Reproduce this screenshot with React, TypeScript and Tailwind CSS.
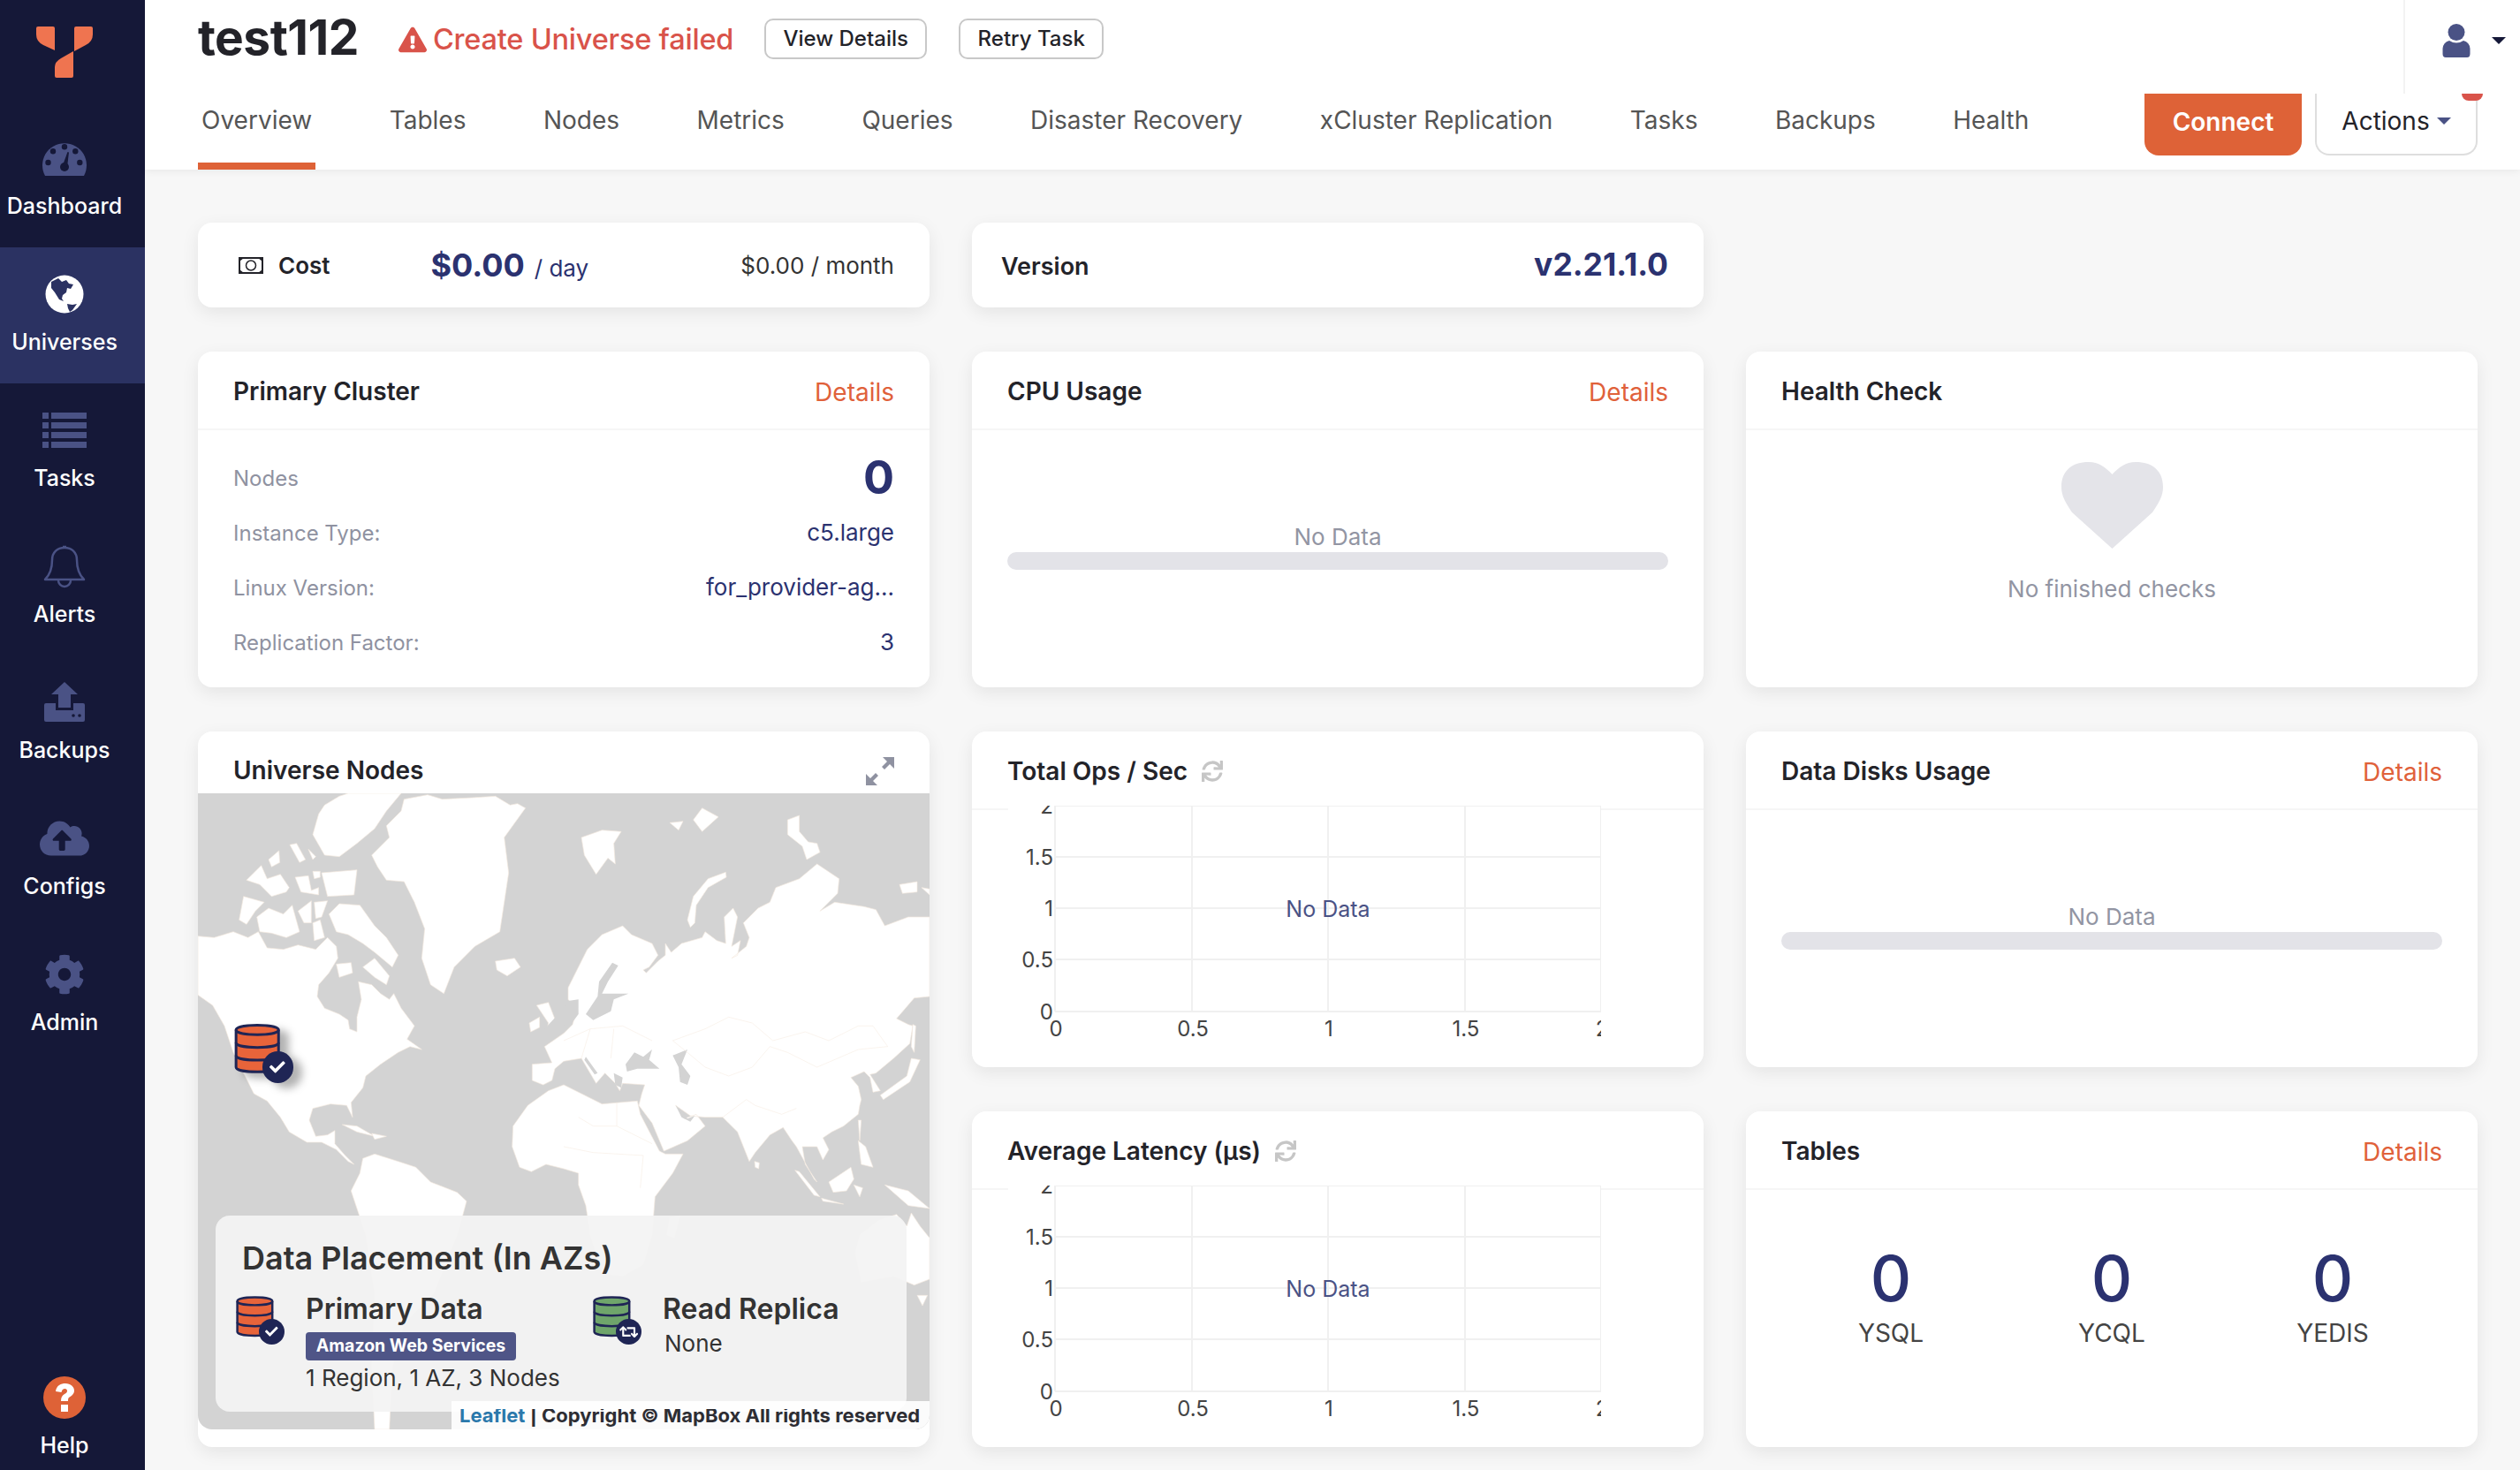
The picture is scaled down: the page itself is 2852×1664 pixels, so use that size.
import React from 'react';
import { FaCheck, FaCloudUploadAlt, FaCog, FaExclamationTriangle, FaRetweet, FaSync } from 'react-icons/fa';

const ICON = '#4a5285';

const DashboardIcon = () => (
  <svg width="50" height="40" viewBox="0 0 50 40">
    <path d="M3 40 A25 25 0 1 1 47 40 Z" fill={ICON} />
    <g fill="#151838">
      <circle cx="6.500" cy="25" r="3.200" />
      <circle cx="12" cy="12.300" r="3.200" />
      <circle cx="25" cy="7.300" r="3.200" />
      <circle cx="37.300" cy="12.300" r="3.200" />
      <circle cx="42.300" cy="25" r="3.200" />
      <circle cx="25" cy="30" r="5" />
      <path d="M23 28 L28.500 13 L30 13.500 L28 30 Z" />
    </g>
  </svg>
);

const GlobeIcon = () => (
  <svg width="44" height="44" viewBox="0 0 44 44">
    <circle cx="22" cy="22" r="21.500" fill="#fff" />
    <path d="M7 8 L15 4 L19 8 L24 6 L27 10 L32 11 L29 16 L25 15 L24 20 L20 23 L19 27 L21 30 L16 28 L11 20 L7 15 Z" fill="#2b3262" />
    <path d="M25 33 L31 34 L36 33 L31 40 L28 42 L26 38 Z" fill="#2b3262" />
  </svg>
);

const TasksIcon = () => (
  <svg width="52" height="40" viewBox="0 0 52 40" fill={ICON}>
    {[0, 11, 22, 33].map(y => (
      <g key={y}>
        <rect x="1" y={y} width="7" height="7" />
        <rect x="11" y={y} width="40" height="7" />
      </g>
    ))}
  </svg>
);

const BellIcon = () => (
  <svg width="48" height="50" viewBox="0 0 48 50" fill="none" stroke={ICON} strokeWidth="2.500" strokeLinejoin="round">
    <path d="M2 40 C9 33 10 24 10 18 C10 9 16 4 24 4 C32 4 38 9 38 18 C38 24 39 33 46 40 Z" />
    <path d="M17 41 A7 7 0 0 0 31 41" />
    <path d="M22 3 H26" />
  </svg>
);

const BackupIcon = () => (
  <svg width="48" height="46" viewBox="0 0 48 46" fill={ICON}>
    <path d="M24 0 L39 14 H31 V29 H17 V14 H9 Z" />
    <path d="M3 24 H14 V32 H34 V24 H45 Q47 24 47 26 V43 Q47 45 45 45 H3 Q1 45 1 43 V26 Q1 24 3 24 Z" />
    <circle cx="34" cy="38" r="1.800" fill="#151838" />
    <circle cx="41" cy="38" r="1.800" fill="#151838" />
  </svg>
);

const HelpIcon = () => (
  <svg width="48" height="48" viewBox="0 0 48 48">
    <circle cx="24" cy="24" r="24" fill="#de6237" />
    <path d="M14 17 C15 10 20 8 25 8 C31 8 35 12 35 16 C35 20 32 22 29 24 C28 25 28 26 28 28 H20 C20 24 21 22 24 20 C26 19 27 18 27 16.500 C27 15 26 14 24.500 14 C22.500 14 21 15.500 20.500 18 Z" fill="#fff" />
    <rect x="20" y="32" width="8" height="8" fill="#fff" />
  </svg>
);

const Logo = () => (
  <svg width="64" height="58" viewBox="0 0 64 58" fill="#ef7450">
    <path d="M2 0 H19 Q21 0 21 2 V27 L8 21 Q0 17 0 9 V2 Q0 0 2 0 Z" />
    <path d="M45 0 H62 Q64 0 64 2 V9 Q64 17 56 21 L43 28 V2 Q43 0 45 0 Z" />
    <path d="M42 28 V56 Q42 58 40 58 H23 Q21 58 21 56 V46 Q21 40 28 36 Z" />
  </svg>
);

const DbIcon = ({ fill, w = 56, overlay }: { fill: string; w?: number; overlay: 'check' | 'swap' }) => (
  <div className="relative shrink-0" style={{ width: w, height: w * 1.04 }}>
    <svg width={w * 0.8} height={w * 0.92} viewBox="0 0 44 52" className="absolute left-0 top-0" fill={fill} stroke="#1f2555" strokeWidth="2.500">
      <path d="M2 9 C2 3 42 3 42 9 V44 C42 50 2 50 2 44 Z" />
      <path d="M2 9 C2 15 42 15 42 9" fill="none" />
      <path d="M2 21 C2 27 42 27 42 21" fill="none" />
      <path d="M2 33 C2 39 42 39 42 33" fill="none" />
    </svg>
    <div className="absolute right-0 bottom-0 flex items-center justify-center rounded-full bg-[#1f2555] text-white" style={{ width: w * 0.52, height: w * 0.52 }}>
      {overlay === 'check' ? <FaCheck size={w * 0.26} /> : <FaRetweet size={w * 0.38} />}
    </div>
  </div>
);

const SideItem = ({ label, icon, active }: { label: string; icon: React.ReactNode; active?: boolean }) => (
  <div className={`flex h-[154px] flex-col items-center pr-[18px] ${active ? 'bg-[#2b3262]' : ''}`}>
    <div className="mt-[28px] flex h-[50px] items-center justify-center">{icon}</div>
    <span className="mt-[13px] text-[25px] leading-[32px] font-medium text-white">{label}</span>
  </div>
);

const Sidebar = () => (
  <aside className="flex h-[1664px] w-[164px] shrink-0 flex-col bg-[#151838]">
    <div className="flex h-[126px] justify-center pt-[30px] pr-[18px]">
      <Logo />
    </div>
    <SideItem label="Dashboard" icon={<DashboardIcon />} />
    <SideItem label="Universes" icon={<GlobeIcon />} active />
    <SideItem label="Tasks" icon={<TasksIcon />} />
    <SideItem label="Alerts" icon={<BellIcon />} />
    <SideItem label="Backups" icon={<BackupIcon />} />
    <SideItem label="Configs" icon={<FaCloudUploadAlt size={56} color={ICON} />} />
    <SideItem label="Admin" icon={<FaCog size={46} color={ICON} />} />
    <div className="mt-auto flex flex-col items-center pr-[18px] pb-[12px]">
      <HelpIcon />
      <span className="mt-[14px] text-[25px] leading-[32px] font-medium text-white">Help</span>
    </div>
  </aside>
);

const TABS = ['Overview', 'Tables', 'Nodes', 'Metrics', 'Queries', 'Disaster Recovery', 'xCluster Replication', 'Tasks', 'Backups', 'Health'];

const Header = () => (
  <header className="relative z-10 h-[192px] bg-white shadow-[0_2px_8px_rgba(0,0,0,0.06)]">
    <div className="flex h-[106px] items-start pl-[60px]">
      <h1 className="mt-[14px] text-[55px] leading-[56px] font-bold tracking-[-0.5px] text-[#232329]">test112</h1>
      <div className="mt-[27px] ml-[45px] flex items-center text-[#d9534a]">
        <FaExclamationTriangle size={32} />
        <span className="ml-[7px] text-[32.500px] leading-[36px] font-medium tracking-[-0.2px]">Create Universe failed</span>
      </div>
      <button className="mt-[21px] ml-[35px] h-[46px] w-[184px] rounded-[10px] border-2 border-[#c8c8c8] text-[24px] font-medium text-[#232329]">View Details</button>
      <button className="mt-[21px] ml-[36px] h-[46px] w-[164px] rounded-[10px] border-2 border-[#c8c8c8] text-[24px] font-medium text-[#232329]">Retry Task</button>
      <div className="ml-auto flex h-[106px] w-[132px] items-start border-l-2 border-[#f3f3f3] pt-[27px] pl-[42px]">
        <svg width="32" height="38" viewBox="0 0 32 38" fill={ICON}>
          <ellipse cx="16" cy="9.500" rx="9.500" ry="9.500" />
          <path d="M8 19 Q16 24 24 19 Q31 21 31.500 28 V34 Q31.500 38 28 38 H4 Q0.500 38 0.500 34 V28 Q1 21 8 19 Z" />
        </svg>
        <svg width="16" height="8" viewBox="0 0 16 8" className="mt-[15px] ml-[24px]"><path d="M0 0 H16 L8 8 Z" fill="#151838" /></svg>
      </div>
    </div>
    <div className="flex h-[86px] items-start pr-[48px] pl-[60px]">
      <nav className="flex h-full items-start gap-[79.500px]">
        {TABS.map((t, i) => (
          <div key={t} className={`h-full px-[4px] pt-[12px] text-[28px] leading-[36px] text-[#555] ${i === 0 ? 'border-b-[8px] border-[#de6237]' : ''}`}>{t}</div>
        ))}
      </nav>
      <button className="ml-auto h-[70px] w-[178px] rounded-b-[16px] bg-[#de6237] pb-[6px] text-[28px] font-semibold text-white">Connect</button>
      <div className="relative ml-[15px] h-[70px] w-[184px] rounded-b-[16px] border-x-2 border-b-2 border-[#dedede] bg-white">
        <div className="flex h-full items-center justify-center pb-[6px] text-[28px] text-[#232329]">
          Actions
          <svg width="16" height="8" viewBox="0 0 16 8" className="ml-[8px]"><path d="M0 0 H16 L8 8 Z" fill={ICON} /></svg>
        </div>
        <div className="absolute top-0 right-[-8px] h-[8px] w-[24px] rounded-b-[12px] bg-[#d9534a]" />
      </div>
    </div>
  </header>
);

const Card = ({ title, details, extra, className, children }: { title: string; details?: boolean; extra?: React.ReactNode; className?: string; children?: React.ReactNode }) => (
  <section className={`flex flex-col rounded-[16px] bg-white shadow-[0_6px_20px_rgba(0,0,0,0.08)] ${className || ''}`}>
    <div className="flex h-[89px] shrink-0 items-start justify-between border-b-2 border-[#f6f6f6] px-[40px] pt-[27px]">
      <div className="flex items-center gap-[16px] text-[28px] leading-[36px] font-semibold text-[#232329]">{title}{extra}</div>
      {details && <span className="pt-[1px] text-[28px] leading-[36px] text-[#e0613a]">Details</span>}
    </div>
    {children}
  </section>
);

const NoData = () => (
  <div className="flex flex-col px-[40px] pt-[104px]">
    <span className="text-center text-[26px] leading-[34px] text-[#9295a3]">No Data</span>
    <div className="h-[20px] rounded-full bg-[#e3e3e8]" />
  </div>
);

const Row = ({ label, value }: { label: string; value: React.ReactNode }) => (
  <div className="flex h-[62px] items-center justify-between">
    <span className="text-[24px] text-[#8f92a1]">{label}</span>
    <span className="pb-[3px] text-[26px] text-[#2b3270]">{value}</span>
  </div>
);

const Chart = () => {
  const xs = [53, 208, 362, 517, 671];
  const ys = [0, 58, 116, 174, 233];
  const ticks = ['2', '1.5', '1', '0.5', '0'];
  return (
    <svg width="671" height="283" viewBox="0 0 671 283" className="relative z-10 -mt-[5px] ml-[41px] bg-white">
      {xs.map(x => <line key={x} x1={x} x2={x} y1="0" y2="233" stroke="#f0f0f0" strokeWidth="2" />)}
      {ys.map(y => <line key={y} x1="53" x2="671" y1={y} y2={y} stroke="#f0f0f0" strokeWidth="2" />)}
      <g fill="#444" fontSize="24" fontFamily="Inter, sans-serif">
        {ticks.map((t, i) => <text key={t} x="51" y={ys[i] + 9} textAnchor="end">{t}</text>)}
        {['0', '0.5', '1', '1.5', '2'].map((t, i) => <text key={t} x={xs[i] + 1} y="261" textAnchor="middle">{t}</text>)}
      </g>
      <text x="362" y="126" textAnchor="middle" fontSize="25" fontFamily="Inter, sans-serif" fill={ICON}>No Data</text>
    </svg>
  );
};

// traced off 3x crops of the map, west half then east half
const WEST = [
  'M590 210 L650 150 L640 110 L690 60 L700 20 L780 5 L830 20 L930 15 L1010 10 L1060 40 L1085 35 L1112 50 L1040 150 L1055 270 L1040 370 L1025 470 L940 520 L870 590 L835 680 L790 650 L760 560 L770 460 L735 370 L700 300 L640 295 L610 250 Z',
  'M430 40 L480 10 L510 0 L690 0 L640 60 L600 120 L540 170 L480 215 L430 210 L390 140 L410 70 Z',
  'M165 295 L215 245 L235 290 L280 275 L310 320 L300 335 L250 350 L210 310 Z',
  'M312 175 L335 170 L365 225 L345 235 Z',
  'M240 225 L275 195 L278 235 L250 250 Z',
  'M330 285 L375 280 L385 330 L410 320 L410 345 L350 335 Z',
  'M420 270 L540 260 L530 345 L440 350 Z',
  'M390 265 L415 265 L415 285 L395 290 Z',
  'M375 190 L400 215 L390 225 Z',
  'M140 430 L155 350 L225 370 L195 400 L165 445 Z',
  'M200 420 L240 390 L290 410 L320 380 L345 470 L300 490 L250 475 L210 470 Z',
  'M340 400 L385 365 L385 440 L360 440 Z',
  'M395 370 L440 365 L420 420 L400 425 Z',
  'M445 410 L480 375 L550 380 L600 450 L640 490 L680 550 L660 590 L600 540 L560 510 L510 480 L470 470 Z',
  'M390 440 L415 430 L430 490 L395 500 Z',
  'M0 485 L55 490 L120 470 L170 490 L205 470 L235 525 L290 530 L340 515 L400 530 L440 490 L470 520 L475 560 L445 610 L410 650 L405 690 L430 730 L480 750 L510 770 L515 800 L540 810 L540 760 L555 700 L545 640 L590 650 L620 680 L650 700 L665 680 L690 730 L735 790 L710 835 L760 870 L720 860 L680 880 L620 920 L570 960 L560 1000 L520 1050 L525 1100 L505 1060 L450 1055 L390 1070 L378 1110 L400 1165 L440 1160 L465 1145 L465 1190 L500 1230 L530 1260 L510 1250 L470 1210 L420 1185 L370 1185 L310 1150 L280 1100 L235 1045 L190 1020 L160 960 L120 880 L90 790 L50 720 L0 685 Z',
  'M470 580 L520 575 L525 610 L480 625 Z',
  'M560 590 L600 560 L650 620 L640 650 L600 625 Z',
  'M490 1125 L540 1130 L600 1165 L540 1150 Z',
  'M590 1155 L640 1165 L600 1175 Z',
  'M520 1350 L550 1290 L560 1240 L600 1225 L680 1250 L740 1270 L790 1320 L880 1355 L912 1385 L900 1430 L880 1500 L800 1700 L700 1800 L660 1950 L650 2160 L600 2160 L590 1950 L600 1700 L570 1500 Z',
  'M1010 570 L1075 560 L1095 590 L1050 620 L1015 600 Z',
  'M1150 720 L1190 710 L1225 800 L1180 825 L1190 780 Z',
  'M1125 780 L1160 760 L1160 795 L1130 810 Z',
];

const EAST = [
  'M60 150 L130 125 L195 130 L170 170 L175 240 L150 220 L110 275 L70 210 Z',
  'M360 100 L405 95 L390 125 Z',
  'M440 90 L470 50 L525 80 L470 130 Z',
  'M760 90 L800 75 L800 130 L830 165 L860 170 L870 200 L825 225 L810 180 L760 140 Z',
  'M420 430 L440 350 L490 290 L550 268 L552 285 L490 320 L450 380 L445 440 L430 455 Z',
  'M1140 310 L1200 300 L1200 335 L1150 340 Z',
  'M1215 320 L1242 325 L1242 345 Z',
  'M15 660 L80 530 L130 480 L200 450 L230 480 L300 510 L320 550 L290 590 L270 600 L280 610 L320 570 L345 550 L345 510 L365 540 L400 510 L470 490 L480 470 L520 500 L550 510 L545 420 L575 390 L590 420 L570 520 L600 500 L590 550 L570 560 L620 520 L630 490 L610 440 L660 390 L700 370 L720 320 L800 290 L860 240 L935 290 L930 340 L870 400 L920 370 L1020 385 L1060 395 L1090 450 L1170 420 L1242 420 L1242 690 L1190 695 L1130 765 L1170 785 L1185 790 L1175 850 L1120 900 L1060 950 L1040 955 L1075 1010 L1050 1015 L1040 965 L1020 945 L975 965 L1000 995 L1010 1040 L1005 1060 L1000 1090 L950 1130 L910 1150 L880 1170 L900 1210 L880 1245 L860 1200 L810 1200 L820 1260 L860 1320 L850 1310 L790 1200 L775 1180 L745 1135 L700 1160 L650 1220 L630 1250 L590 1150 L540 1100 L480 1100 L430 1095 L380 1060 L410 1105 L450 1090 L480 1130 L420 1180 L340 1215 L300 1120 L255 1060 L265 1020 L275 990 L200 985 L190 1010 L175 985 L140 950 L110 985 L60 900 L0 910 L-30 935 L-40 975 L-70 990 L-107 975 L-107 920 L-40 915 L-65 860 L0 815 L30 785 L45 735 L15 700 Z',
  'M-172 1130 L-122 1060 L-52 1010 L0 990 L60 1020 L130 1055 L250 1045 L260 1090 L325 1215 L345 1225 L405 1225 L370 1290 L310 1370 L300 1500 L270 1600 L200 1640 L130 1630 L90 1500 L75 1400 L50 1330 L50 1290 L0 1275 L-60 1260 L-110 1285 L-150 1270 L-175 1200 Z',
  'M360 1440 L395 1435 L375 1510 L350 1500 Z',
  'M1180 900 L1210 905 L1175 980 L1085 1040 L1075 1025 L1165 960 Z',
  'M1185 785 L1195 790 L1190 880 L1180 860 Z',
  'M648 1250 L664 1255 L662 1275 L650 1270 Z',
  'M785 1280 L800 1285 L870 1370 L850 1365 Z',
  'M875 1375 L950 1395 L880 1385 Z',
  'M900 1320 L975 1270 L985 1310 L960 1350 L915 1355 Z',
  'M985 1330 L1015 1340 L1005 1370 Z',
  'M1000 1180 L1025 1200 L1050 1270 L1010 1260 Z',
  'M1000 1110 L1010 1110 L1005 1180 Z',
  'M1090 1330 L1170 1350 L1242 1410 L1170 1400 Z',
  'M1005 1500 L1070 1450 L1130 1430 L1165 1470 L1180 1425 L1210 1470 L1242 1510 L1242 1650 L1190 1670 L1120 1640 L1010 1660 L990 1560 Z',
  'M1200 1705 L1235 1705 L1218 1740 Z',
];

const SEAS = [
  'M15 705 L50 700 L50 750 L35 770 L0 790 L-65 850 L-65 800 L0 730 Z',
  'M120 640 L165 575 L185 585 L150 640 L130 680 L220 680 L170 700 L160 740 L100 770 L75 750 L115 690 Z',
  'M210 920 L240 880 L270 895 L300 870 L290 905 L325 935 L250 935 L215 945 Z',
  'M370 890 L420 870 L400 920 L430 960 L420 990 L395 980 L390 930 Z',
  'M75 895 L115 950 L105 955 L70 905 Z',
  'M170 950 L200 965 L195 1000 L175 990 Z',
  'M380 1060 L420 1105 L445 1095 L430 1115 L400 1100 Z',
];

const BORDERS = [
  'M370 840 L480 800 L560 760 L640 780 L710 840 L820 810 L900 840 L1000 790 L1050 790 L1100 860 L1000 870 L860 930 L760 880 L700 860 L640 930 L560 960 L480 930 L420 880 Z',
  'M180 1050 L180 1130 L100 1130 L50 1100 M180 1130 L300 1190 M0 1200 L100 1220 L270 1230 L260 1340 M540 1100 L620 1040 L650 1060 L740 1090 L790 1070',
  'M0 840 L90 800 L200 790 L300 840 M90 800 L60 900 M170 800 L160 900',
];

const WorldMap = () => (
  <svg viewBox="0 0 2484 2160" className="h-full w-full">
    <rect width="2484" height="2160" fill="#d3d3d3" />
    <g fill="#fff" stroke="#f5eadf" strokeWidth="2">
      {WEST.map(d => <path key={d} d={d} />)}
      <g transform="translate(1242,0)">
        {EAST.map(d => <path key={d} d={d} />)}
        <g fill="#d3d3d3" stroke="none">{SEAS.map(d => <path key={d} d={d} />)}</g>
        <g fill="none" stroke="#f7eee6" strokeWidth="2">{BORDERS.map(d => <path key={d} d={d} />)}</g>
      </g>
    </g>
  </svg>
);

const NodesCard = () => (
  <section className="row-span-2 flex flex-col rounded-[16px] bg-white pb-[20px] shadow-[0_6px_20px_rgba(0,0,0,0.08)]">
    <div className="flex h-[70px] shrink-0 items-start justify-between pt-[26px] pr-[40px] pl-[40px]">
      <span className="text-[28px] leading-[36px] font-semibold text-[#232329]">Universe Nodes</span>
      <svg width="32" height="32" viewBox="0 0 32 32" className="mt-[3px]" fill="#8f92a1">
        <path d="M32 0 V13 L27 8 L21 14 L18 11 L24 5 L19 0 Z" />
        <path d="M0 32 V19 L5 24 L11 18 L14 21 L8 27 L13 32 Z" />
      </svg>
    </div>
    <div className="relative flex-1 overflow-hidden rounded-b-[16px]">
      <WorldMap />
      <div className="absolute top-[257px] left-[40px] drop-shadow-[10px_6px_5px_rgba(0,0,0,0.3)]">
        <DbIcon fill="#e8643a" w={68} overlay="check" />
      </div>
      <div className="absolute top-[478px] left-[20px] h-[222px] w-[782px] rounded-[16px] bg-[#f3f3f3]/95 pt-[26px] pl-[22px]">
        <div className="pl-[8px] text-[36px] leading-[44px] font-semibold text-[#333]">Data Placement (In AZs)</div>
        <div className="mt-[18px] flex">
          <div className="flex w-[404px]">
            <DbIcon fill="#e8643a" w={56} overlay="check" />
            <div className="-mt-[2px] ml-[24px]">
              <div className="text-[32px] leading-[40px] font-semibold text-[#333]">Primary Data</div>
              <div className="mt-[6px] flex h-[32px] w-[238px] items-center justify-center rounded-[4px] bg-[#4f5587] text-[19.500px] font-bold text-white">Amazon Web Services</div>
              <div className="mt-[2px] text-[26px] leading-[36px] text-[#333]">1 Region, 1 AZ, 3 Nodes</div>
            </div>
          </div>
          <div className="flex">
            <DbIcon fill="#6fa56b" w={56} overlay="swap" />
            <div className="-mt-[2px] ml-[24px]">
              <div className="text-[32px] leading-[40px] font-semibold text-[#333]">Read Replica</div>
              <div className="mt-[1px] pl-[2px] text-[26px] leading-[36px] text-[#333]">None</div>
            </div>
          </div>
        </div>
      </div>
      <div className="absolute right-0 bottom-0 flex h-[32px] w-[541px] items-end rounded-br-[16px] bg-white/90 pl-[9px]">
        <div className="h-[23px] overflow-hidden">
          <div className="-mt-[8px] text-[22px] leading-[30px] font-bold whitespace-nowrap text-[#2d2d33]">
            <span className="text-[#2a78ab]">Leaflet</span> | Copyright © MapBox All rights reserved
          </div>
        </div>
      </div>
    </div>
  </section>
);

const Zero = ({ label }: { label: string }) => (
  <div className="flex w-[250px] flex-col items-center">
    <span className="text-[72px] leading-[80px] font-medium text-[#2b3270]">0</span>
    <span className="mt-[4px] text-[28px] leading-[36px] text-[#444]">{label}</span>
  </div>
);

export default function App() {
  return (
    <div className="flex h-[1664px] w-[2852px] overflow-hidden bg-[#f7f7f7] font-['Inter',sans-serif]">
      <Sidebar />
      <main className="flex min-w-0 flex-1 flex-col">
        <Header />
        <div className="grid grid-cols-[828px_828px_828px] grid-rows-[96px_380px_380px_380px] gap-x-[48px] gap-y-[50px] pt-[60px] pl-[60px]">
          <section className="flex items-center rounded-[16px] bg-white px-[40px] shadow-[0_6px_20px_rgba(0,0,0,0.08)]">
            <svg width="28" height="19" viewBox="0 0 28 19" className="mr-[17px] ml-[6px]">
              <rect x="1" y="1" width="26" height="17" fill="#fff" stroke="#232329" strokeWidth="2" />
              <circle cx="14" cy="9.500" r="5.500" fill="none" stroke="#232329" strokeWidth="1.500" />
              <path d="M1 1 H6 L1 5 Z M27 1 H22 L27 5 Z M1 18 H6 L1 14 Z M27 18 H22 L27 14 Z" fill="#232329" />
            </svg>
            <span className="text-[26px] font-semibold text-[#232329]">Cost</span>
            <span className="ml-[114px] text-[36px] leading-[48px] font-bold text-[#2b3270]">$0.00</span>
            <span className="mt-[6px] ml-[11px] text-[26px] text-[#2b3270]">/ day</span>
            <span className="ml-auto text-[26px] text-[#333]">$0.00 / month</span>
          </section>
          <section className="flex items-center justify-between rounded-[16px] bg-white pr-[40px] pl-[33px] shadow-[0_6px_20px_rgba(0,0,0,0.08)]">
            <span className="mt-[4px] text-[27px] font-semibold text-[#232329]">Version</span>
            <span className="text-[35.500px] font-bold text-[#2b3270]">v2.21.1.0</span>
          </section>
          <div />

          <Card title="Primary Cluster" details>
            <div className="px-[40px] pt-[24px]">
              <Row label="Nodes" value={<span className="text-[52px] leading-[62px] font-bold">0</span>} />
              <Row label="Instance Type:" value="c5.large" />
              <Row label="Linux Version:" value="for_provider-ag..." />
              <Row label="Replication Factor:" value="3" />
            </div>
          </Card>
          <Card title="CPU Usage" details><NoData /></Card>
          <Card title="Health Check">
            <div className="flex flex-col items-center pt-[36px]">
              <svg width="115" height="99" viewBox="0 0 115 99">
                <path d="M57.500 98 L12 57 C4 45 0 38 0 28 C0 10 12 0 31 0 C42 0 50 6 57.500 14 C65 6 73 0 84 0 C103 0 115 10 115 28 C115 38 111 45 103 57 Z" fill="#e4e4e9" />
              </svg>
              <span className="mt-[27px] text-[26px] leading-[36px] text-[#9295a3]">No finished checks</span>
            </div>
          </Card>

          <NodesCard />
          <Card title="Total Ops / Sec" extra={<FaSync size={24} color="#c6c6c6" />}><Chart /></Card>
          <Card title="Data Disks Usage" details><NoData /></Card>
          <Card title="Average Latency (µs)" extra={<FaSync size={24} color="#c6c6c6" />}><Chart /></Card>
          <Card title="Tables" details>
            <div className="flex justify-center pt-[60px]"><Zero label="YSQL" /><Zero label="YCQL" /><Zero label="YEDIS" /></div>
          </Card>
        </div>
      </main>
    </div>
  );
}
